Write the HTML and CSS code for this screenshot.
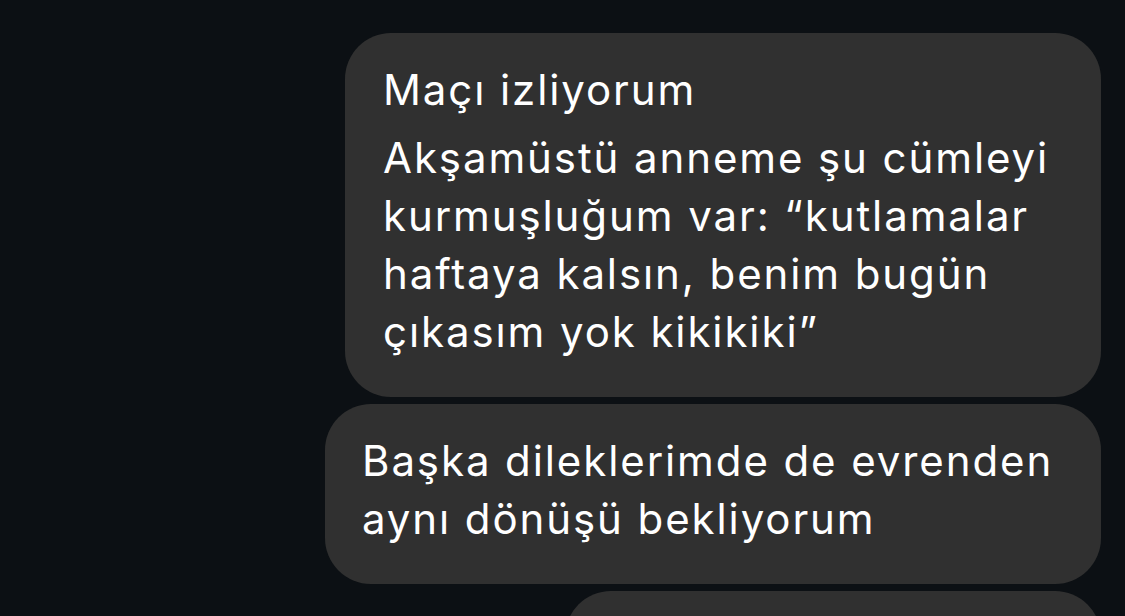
FILE: index.html
```html
<!DOCTYPE html>
<html lang="tr">
<head>
<meta charset="utf-8">
<title>Mesajlar</title>
<link rel="stylesheet" href="styles.css">
</head>
<body>
<main class="thread">
  <div class="bubble bubble-a">
    <p class="msg">Maçı izliyorum</p>
    <p class="msg">Akşamüstü anneme şu cümleyi kurmuşluğum var: “kutlamalar haftaya kalsın, benim bugün çıkasım yok kikikiki”</p>
  </div>
  <div class="bubble bubble-b">
    <p class="msg">Başka dileklerimde de evrenden aynı dönüşü bekliyorum</p>
  </div>
  <div class="bubble bubble-c"></div>
</main>
</body>
</html>
```

FILE: styles.css
```css
html, body {
  margin: 0;
  padding: 0;
  background: #0c1014;
  height: 100%;
  overflow: hidden;
}

.thread {
  display: flex;
  flex-direction: column;
  align-items: flex-end;
  gap: 7px;
  padding: 33px 24px 0 0;
  font-family: "Inter", "Noto Sans", sans-serif;
  font-size: 42px;
  line-height: 58px;
  letter-spacing: 1.9px;
  color: #ffffff;
}

.bubble {
  background: #303030;
  border-radius: 46px;
  box-sizing: border-box;
  padding: 28px 24px 36px 38px;
}

.msg {
  margin: 0;
}

.msg + .msg {
  margin-top: 10px;
}

.bubble-a {
  width: 756px;
}

.bubble-b {
  width: 776px;
  padding-left: 37px;
}

.bubble-c {
  width: 536px;
  height: 120px;
  flex-shrink: 0;
}
```
